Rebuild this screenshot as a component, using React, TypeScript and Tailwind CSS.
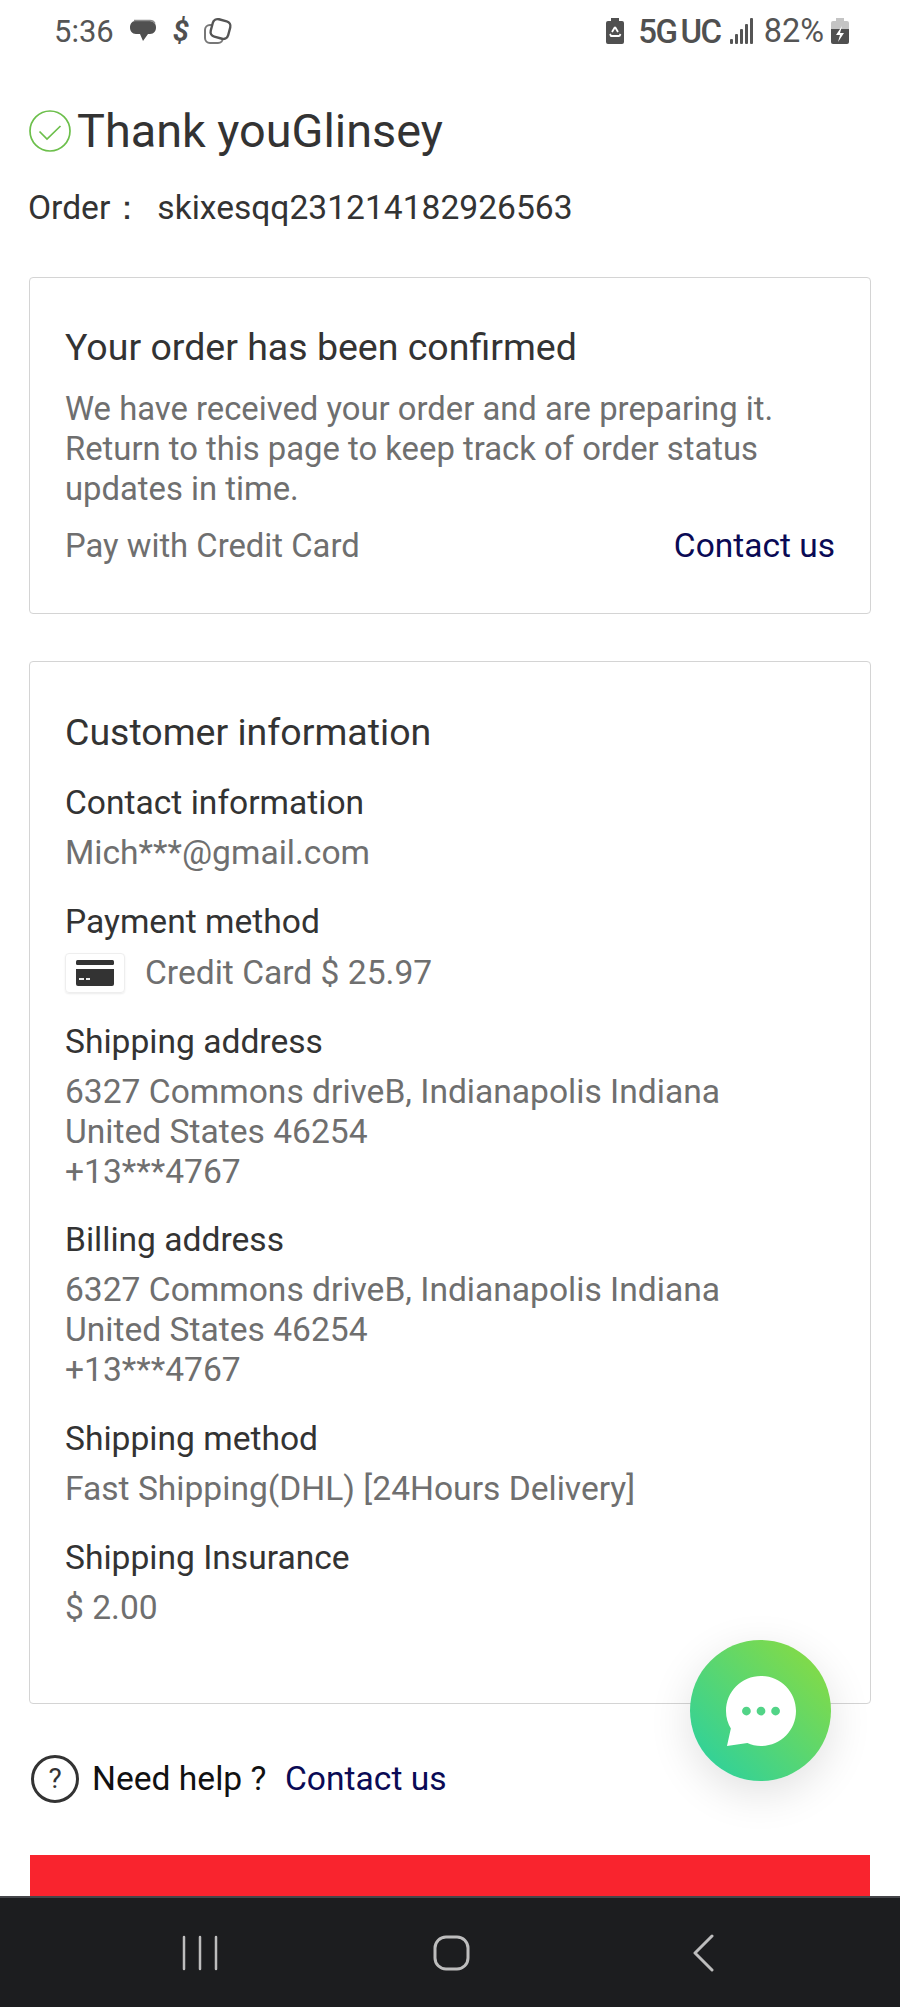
import React from "react";

function Info({ title, lines, cls = "mt-[29px]" }: { title: string; lines: string[]; cls?: string }) {
  return (
    <div className={cls}>
      <div className="text-[33.6px] leading-[40px] text-[#333333]">{title}</div>
      <div className="mt-[10px] text-[33.6px] leading-[40px] text-[#6f6f6f]">
        {lines.map((l, i) => (
          <div key={i}>{l}</div>
        ))}
      </div>
    </div>
  );
}

function StatusBar() {
  return (
    <div className="h-[62px] flex items-center justify-between pl-[54px] pr-[50px] text-[#555555] text-[31px]">
      <div className="flex items-center">
        <span className="leading-none">5:36</span>
        <svg width="28" height="26" viewBox="0 0 28 26" className="ml-[15px]">
          <path d="M6 3h15c4 0 6 3 6 6.500S25 16 21 16h-2l-5 7-3-7H7c-4 0-6-3-6-6.500S3 3 6 3z" fill="#505050" />
          <path d="M5 2.500h16c2 0 4 1 5 3" fill="none" stroke="#8a8a8a" strokeWidth="1.500" />
        </svg>
        <span className="ml-[16px] font-bold italic text-[29px] leading-none text-[#505050]">$</span>
        <svg width="30" height="28" viewBox="0 0 30 28" className="ml-[14px]">
          <rect x="2" y="8" width="18" height="18" rx="5" fill="#fff" stroke="#777" strokeWidth="2" />
          <rect x="8.500" y="3" width="18" height="18" rx="5" transform="rotate(15 17.500 12)" fill="#fff" stroke="#555" strokeWidth="2.400" />
        </svg>
      </div>
      <div className="flex items-center">
        <svg width="20" height="28" viewBox="0 0 20 28">
          <path d="M6 1h8v3h3a2 2 0 0 1 2 2v19a2 2 0 0 1-2 2H3a2 2 0 0 1-2-2V6a2 2 0 0 1 2-2h3z" fill="#505050" />
          <path d="M10 10l-3 5M10 10l3 5M5.500 19h9M6 19l-1-2M14.500 19l1-2" stroke="#fff" strokeWidth="1.800" fill="none" />
        </svg>
        <span className="ml-[13px] text-[33px] font-medium leading-none tracking-[-1.500px] text-[#505050]">5G</span>
        <span className="ml-[4px] text-[33px] font-medium leading-none tracking-[-1.500px] text-[#505050]">UC</span>
        <svg width="24" height="26" viewBox="0 0 24 26" className="ml-[9px]">
          <rect x="0" y="21" width="3" height="5" rx="1" fill="#555" />
          <rect x="5" y="16" width="3" height="10" rx="1" fill="#555" />
          <rect x="10" y="11" width="3" height="15" rx="1" fill="#555" />
          <rect x="15" y="6" width="3" height="20" rx="1" fill="#555" />
          <rect x="20" y="0" width="3" height="26" rx="1" fill="#555" />
        </svg>
        <span className="ml-[10px] text-[32.500px] leading-none">82%</span>
        <svg width="20" height="28" viewBox="0 0 20 28" className="ml-[6px]">
          <path d="M6 1h8v3h3a2 2 0 0 1 2 2v6H1V6a2 2 0 0 1 2-2h3z" fill="#c4c4c4" />
          <path d="M1 12h18v13a2 2 0 0 1-2 2H3a2 2 0 0 1-2-2z" fill="#505050" />
          <path d="M12 9l-6 9h4l-2 7 6-9h-4z" fill="#fff" />
        </svg>
      </div>
    </div>
  );
}

export default function App() {
  return (
    <div className="relative w-[900px] h-[2007px] overflow-hidden bg-white flex flex-col font-['Roboto',sans-serif]">
      <StatusBar />
      <div className="flex-1 min-h-0 px-[29px] flex flex-col">
        <div className="mt-[43px] flex items-center h-[52px]">
          <svg width="42" height="42" viewBox="0 0 42 42" className="shrink-0">
            <circle cx="21" cy="21" r="20" fill="none" stroke="#6cbf4b" strokeWidth="1.700" />
            <path d="M10.500 21.500l7.500 7.500 13.500-13" fill="none" stroke="#6cbf4b" strokeWidth="1.700" />
          </svg>
          <h1 className="ml-[6px] text-[46.800px] leading-[52px] text-[#333333]">Thank youGlinsey</h1>
        </div>
        <div className="mt-[31px] text-[33.600px] leading-[40px] text-[#333333] whitespace-pre -ml-[1px]">
          <span>Order：</span>
          <span className="ml-[13px]">skixesqq231214182926563</span>
        </div>

        <section className="mt-[49px] h-[337px] border border-[#d4d4d4] rounded-[4px] px-[35px] pt-[49px]">
          <div className="text-[37.500px] leading-[40px] text-[#333333]">Your order has been confirmed</div>
          <div className="mt-[22px] text-[32.800px] leading-[40px] text-[#6f6f6f]">
            We have received your order and are preparing it.
            <br />
            Return to this page to keep track of order status
            <br />
            updates in time.
          </div>
          <div className="mt-[17px] flex justify-between items-center leading-[40px]">
            <span className="text-[32.800px] text-[#6f6f6f]">Pay with Credit Card</span>
            <span className="text-[33.500px] text-[#0a0a55]">Contact us</span>
          </div>
        </section>

        <section className="mt-[47px] h-[1043px] border border-[#d4d4d4] rounded-[4px] px-[35px] pt-[50px]">
          <div className="text-[37.500px] leading-[40px] text-[#333333]">Customer information</div>
          <Info cls="mt-[31px]" title="Contact information" lines={["Mich***@gmail.com"]} />
          <div className="mt-[29px]">
            <div className="text-[33.600px] leading-[40px] text-[#333333]">Payment method</div>
            <div className="mt-[11px] flex items-center text-[33.600px] leading-[40px] text-[#6f6f6f]">
              <div className="w-[60px] h-[40px] border border-[#eeeeee] rounded-[4px] flex items-center justify-center shadow-[0_1px_2px_rgba(0,0,0,0.08)]">
                <svg width="38" height="26" viewBox="0 0 38 26">
                  <rect x="0" y="0" width="38" height="5" rx="1.500" fill="#333" />
                  <path d="M0 9h38v15a2 2 0 0 1-2 2H2a2 2 0 0 1-2-2z" fill="#333" />
                  <rect x="3" y="18" width="5" height="2" fill="#eee" />
                  <rect x="10" y="18" width="4" height="2" fill="#eee" />
                </svg>
              </div>
              <span className="ml-[20px]">Credit Card $ 25.97</span>
            </div>
          </div>
          <Info cls="mt-[29px]" title="Shipping address" lines={["6327 Commons driveB, Indianapolis Indiana", "United States 46254", "+13***4767"]} />
          <Info cls="mt-[28px]" title="Billing address" lines={["6327 Commons driveB, Indianapolis Indiana", "United States 46254", "+13***4767"]} />
          <Info cls="mt-[29px]" title="Shipping method" lines={["Fast Shipping(DHL) [24Hours Delivery]"]} />
          <Info cls="mt-[29px]" title="Shipping Insurance" lines={["$ 2.00"]} />
        </section>

        <div className="mt-[50px] h-[50px] flex items-center pl-[2px] text-[33.600px] leading-[40px]">
          <div className="w-[48px] h-[48px] rounded-full border-[3px] border-[#333333] flex items-center justify-center text-[28px] text-[#333333]">?</div>
          <span className="ml-[13px] text-[#111111] whitespace-pre">Need help ?  </span>
          <span className="ml-[2px] text-[#0a0a55]">Contact us</span>
        </div>

        <div className="mt-[51px] flex-1 bg-[#f9242e] mx-[1px]" />
      </div>

      <div className="h-[111px] shrink-0 bg-[#1c1d1f] border-t-2 border-[#45464a] flex items-center pl-[182px]">
        <svg width="36" height="36" viewBox="0 0 36 36" fill="none" stroke="#bdbdbd" strokeWidth="2.500" strokeLinecap="round">
          <path d="M2 2v32M18 2v32M34 2v32" />
        </svg>
        <svg width="37" height="36" viewBox="0 0 37 36" fill="none" stroke="#bdbdbd" strokeWidth="3" className="ml-[215px]">
          <rect x="2" y="2" width="33" height="32" rx="11" />
        </svg>
        <svg width="22" height="38" viewBox="0 0 22 38" fill="none" stroke="#bdbdbd" strokeWidth="3" strokeLinecap="round" strokeLinejoin="round" className="ml-[222px]">
          <path d="M20 2L3 19l17 17" />
        </svg>
      </div>

      <div className="absolute left-[690px] top-[1640px] w-[141px] h-[141px] rounded-full bg-[linear-gradient(45deg,#25d0a5,#8fdc3b)] shadow-[0_12px_44px_rgba(0,0,0,0.12)] flex items-center justify-center">
        <svg width="70" height="72" viewBox="0 0 72 72">
          <path d="M36 0c20 0 36 16 36 36S56 72 36 72c-5 0-10-1-14-3L1 72l4-18C2 49 0 43 0 36 0 16 16 0 36 0z" fill="#fff" />
          <circle cx="21" cy="36" r="4.500" fill="#52d487" />
          <circle cx="36" cy="36" r="4.500" fill="#52d487" />
          <circle cx="51" cy="36" r="4.500" fill="#52d487" />
        </svg>
      </div>
    </div>
  );
}
